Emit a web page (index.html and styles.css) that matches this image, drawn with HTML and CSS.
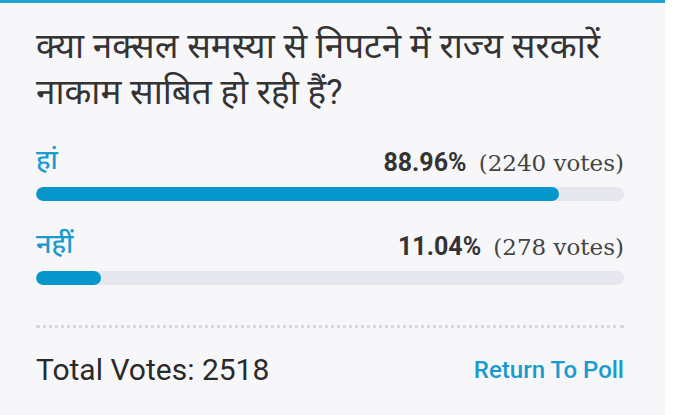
FILE: index.html
```html
<!DOCTYPE html>
<html lang="hi">
<head>
    <meta charset="UTF-8">
    <meta name="viewport" content="width=device-width, initial-scale=1.0">
    <title>Poll Result</title>
    <link rel="stylesheet" href="styles.css">
</head>
<body>
    <div class="poll">
        <h2 class="question">क्या नक्सल समस्या से निपटने में राज्य सरकारें नाकाम साबित हो रही हैं?</h2>
        <div class="answer">
            <div class="answer-head">
                <span class="label">हां</span>
                <span class="count"><b>88.96%</b> <span class="votes">(2240 votes)</span></span>
            </div>
            <div class="bar"><div class="fill" style="width: 88.96%"></div></div>
        </div>
        <div class="answer">
            <div class="answer-head">
                <span class="label">नहीं</span>
                <span class="count"><b>11.04%</b> <span class="votes">(278 votes)</span></span>
            </div>
            <div class="bar"><div class="fill" style="width: 11.04%"></div></div>
        </div>
        <div class="footer">
            <span class="total">Total Votes: 2518</span>
            <a href="#" class="back">Return To Poll</a>
        </div>
    </div>
</body>
</html>
```

FILE: styles.css
```css
body {
    margin: 0;
    background-color: #fff;
    font-family: Roboto, "Noto Sans", sans-serif;
    color: #333;
}
.poll {
    width: 665px;
    height: 415px;
    box-sizing: border-box;
    background-color: #f7f7f9;
    border-top: 3px solid #1fa3d6;
    padding: 21px 41px 0 36px;
}
.question {
    margin: 0 0 27px;
    font-size: 35px;
    font-weight: normal;
    line-height: 46px;
    color: #333;
}
.answer {
    margin-bottom: 26px;
}
.answer-head {
    display: flex;
    justify-content: space-between;
    align-items: flex-end;
    height: 34px;
    margin-bottom: 10px;
}
.label {
    color: #1a9bcf;
    font-size: 27px;
    font-weight: 500;
}
.count {
    font-family: Roboto, sans-serif;
    font-size: 25px;
}
.count b {
    font-weight: 700;
    color: #333;
}
.votes {
    margin-left: 6px;
    font-family: "DejaVu Serif", serif;
    color: #444;
    font-size: 23px;
}
.bar {
    height: 14px;
    background-color: #e7e7ef;
    border-radius: 7px;
    overflow: hidden;
}
.fill {
    height: 100%;
    background-color: #0596cb;
    border-radius: 7px;
}
.footer {
    display: flex;
    justify-content: space-between;
    align-items: center;
    border-top: 3px dotted #d8d8dc;
    margin-top: 40px;
    padding-top: 24px;
}
.total {
    font-size: 30px;
    color: #2a2a2a;
}
.back {
    color: #1a9bcf;
    font-size: 24px;
    font-weight: 500;
    text-decoration: none;
}
```
